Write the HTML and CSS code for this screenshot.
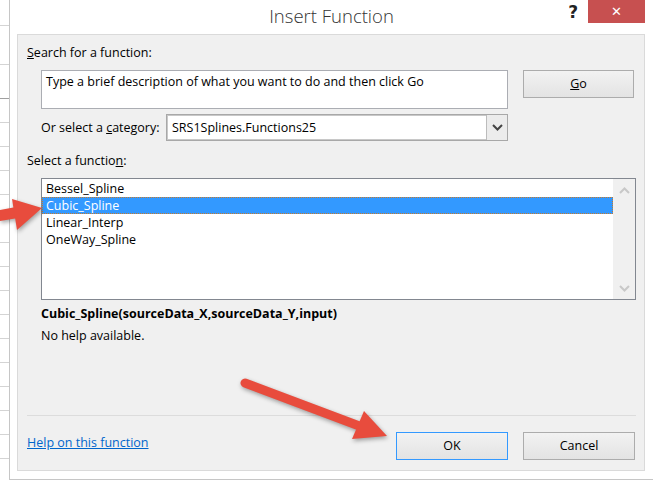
FILE: index.html
```html
<!DOCTYPE html>
<html>
<head>
<meta charset="utf-8">
<link rel="stylesheet" href="styles.css">
</head>
<body>
<div class="screen">
  <div class="sheet">
    <div class="row r1"></div>
    <div class="row r2"></div>
    <div class="row r3"></div>
    <div class="row"></div><div class="row"></div><div class="row"></div><div class="row"></div>
    <div class="row"></div><div class="row"></div><div class="row"></div><div class="row"></div>
    <div class="row"></div><div class="row"></div><div class="row"></div><div class="row"></div>
    <div class="row"></div><div class="row"></div><div class="row"></div><div class="row"></div>
  </div>
  <div class="dialog">
    <div class="titlebar">
      <div class="title">Insert Function</div>
      <div class="help-q">?</div>
      <div class="close">&#x2715;</div>
    </div>
    <div class="panel">
      <div class="label"><u>S</u>earch for a function:</div>
      <div class="search-row">
        <div class="textarea">Type a brief description of what you want to do and then click Go</div>
        <div class="btn go"><u>G</u>o</div>
      </div>
      <div class="cat-row">
        <div class="cat-label">Or select a <u>c</u>ategory:</div>
        <div class="select">
          <div class="select-val">SRS1Splines.Functions25</div>
          <div class="select-btn">
            <svg width="11" height="7" viewBox="0 0 11 7"><path d="M1 1 L5.5 5.5 L10 1" fill="none" stroke="#444" stroke-width="2"/></svg>
          </div>
        </div>
      </div>
      <div class="label func-label">Select a functio<u>n</u>:</div>
      <div class="listbox">
        <div class="items">
          <div class="item">Bessel_Spline</div>
          <div class="item sel">Cubic_Spline</div>
          <div class="item">Linear_Interp</div>
          <div class="item">OneWay_Spline</div>
        </div>
        <div class="scroll">
          <svg width="11" height="7" viewBox="0 0 11 7"><path d="M1 6 L5.5 1.5 L10 6" fill="none" stroke="#c8c8c8" stroke-width="2"/></svg>
          <svg width="11" height="7" viewBox="0 0 11 7"><path d="M1 1 L5.5 5.5 L10 1" fill="none" stroke="#c8c8c8" stroke-width="2"/></svg>
        </div>
      </div>
      <div class="sig">Cubic_Spline(sourceData_X,sourceData_Y,input)</div>
      <div class="desc">No help available.</div>
      <div class="sep"></div>
      <div class="footer">
        <a class="link" href="#">Help on this function</a>
        <div class="buttons">
          <div class="btn ok">OK</div>
          <div class="btn cancel">Cancel</div>
        </div>
      </div>
    </div>
  </div>
  <svg class="arrows" width="653" height="480" viewBox="0 0 653 480">
    <g fill="#e84c3d">
      <polygon points="0,210 16,207 18,218 0,221"/>
      <polygon points="12,199 42,208 17,230"/>
      <line x1="245" y1="383" x2="362" y2="427" stroke="#e84c3d" stroke-width="9" stroke-linecap="round"/>
      <polygon points="364,411 387,436 352,439"/>
    </g>
  </svg>
</div>
</body>
</html>
```
FILE: styles.css
```css
* { box-sizing: border-box; }
html, body { margin: 0; padding: 0; }
body {
  width: 653px;
  height: 480px;
  overflow: hidden;
  font-family: "Open Sans", "Noto Sans", sans-serif;
  font-size: 12.5px;
  color: #000;
  background: #fff;
}
.screen {
  position: relative;
  display: flex;
  width: 653px;
  height: 480px;
}
.sheet {
  width: 9px;
  flex: none;
  background: #fff;
}
.row {
  height: 24px;
  border-bottom: 1px solid #d4d4d4;
}
.row.r1 { height: 26px; }
.row.r2 { height: 39px; }
.row.r3 { height: 34px; border-bottom-color: #a0a0a0; }

.dialog {
  flex: 1;
  height: 480px;
  background: #fff;
  border-left: 1px solid #c6c6c6;
  border-bottom: 1px solid #c6c6c6;
  padding: 0 8px 8px 7px;
  display: flex;
  flex-direction: column;
}
.titlebar {
  position: relative;
  height: 34px;
  flex: none;
}
.title {
  text-align: center;
  font-size: 18.5px;
  font-weight: 300;
  color: #333;
  line-height: 20px;
  padding-top: 6px;
  margin-left: -7px;
  margin-right: -8px;
}
.help-q {
  position: absolute;
  right: 67px;
  top: 0;
  font-family: "DejaVu Sans", sans-serif;
  font-size: 17px;
  font-weight: bold;
  color: #222;
  line-height: 24px;
}
.close {
  position: absolute;
  right: 0;
  top: 0;
  width: 57px;
  height: 23px;
  background: #c75050;
  color: #fff;
  font-family: "DejaVu Sans", sans-serif;
  font-weight: bold;
  font-size: 13px;
  line-height: 23px;
  text-align: center;
}
.panel {
  flex: 1;
  background: #f0f0f0;
  border: 1px solid #dadada;
  padding: 10px 8px 0 9px;
}
.label {
  line-height: 16px;
  white-space: nowrap;
}
.search-row {
  display: flex;
  align-items: flex-start;
  gap: 15px;
  margin-top: 9px;
  padding-left: 14px;
}
.textarea {
  width: 467px;
  height: 39px;
  background: #fff;
  border: 1px solid #abadb3;
  padding: 3px 4px;
  line-height: 16px;
  white-space: nowrap;
}
.btn {
  height: 28px;
  border: 1px solid #acacac;
  background: linear-gradient(#f2f2f2, #e3e3e3);
  text-align: center;
  line-height: 26px;
  color: #000;
}
.go { width: 111px; }
.cat-row {
  display: flex;
  align-items: center;
  margin-top: 5px;
  padding-left: 14px;
}
.cat-label {
  width: 125px;
  white-space: nowrap;
}
.select {
  width: 342px;
  height: 27px;
  display: flex;
  background: #fff;
  border: 1px solid #a8a8a8;
  box-shadow: inset 0 0 0 1px #c8c8c8;
}
.select-val {
  flex: 1;
  padding-left: 5px;
  line-height: 25px;
}
.select-btn {
  width: 21px;
  border-left: 1px solid #bcbcbc;
  background: #ececec;
  display: flex;
  align-items: center;
  justify-content: center;
}
.func-label { margin-top: 12px; }
.listbox {
  margin-top: 9px;
  margin-left: 14px;
  height: 122px;
  border: 1px solid #828790;
  background: #fff;
  display: flex;
}
.items {
  flex: 1;
  padding-top: 1px;
}
.item {
  height: 17px;
  line-height: 17px;
  padding-left: 4px;
  white-space: nowrap;
}
.item.sel {
  background: #3399ff;
  color: #fff;
  outline: 1px dotted #c87a2a;
  outline-offset: -1px;
}
.scroll {
  width: 22px;
  background: #f0f0f0;
  display: flex;
  flex-direction: column;
  justify-content: space-between;
  align-items: center;
  padding: 8px 0 7px;
}
.sig {
  margin-top: 6px;
  margin-left: 14px;
  font-weight: bold;
  line-height: 16px;
  white-space: nowrap;
}
.desc {
  margin-top: 6px;
  margin-left: 14px;
  line-height: 16px;
}
.sep {
  margin-top: 71px;
  height: 1px;
  background: #dcdcdc;
}
.footer {
  display: flex;
  align-items: center;
  justify-content: space-between;
  margin-top: 16px;
}
.link {
  color: #0066cc;
  text-decoration: underline;
  line-height: 16px;
  margin-top: -6px;
}
.buttons {
  display: flex;
  gap: 15px;
  margin-right: 1px;
}
.ok, .cancel { width: 112px; }
.ok { border-color: #3399ff; }
.arrows {
  position: absolute;
  left: 0;
  top: 0;
  pointer-events: none;
  filter: drop-shadow(1px 2px 2px rgba(0,0,0,0.35));
}
```
